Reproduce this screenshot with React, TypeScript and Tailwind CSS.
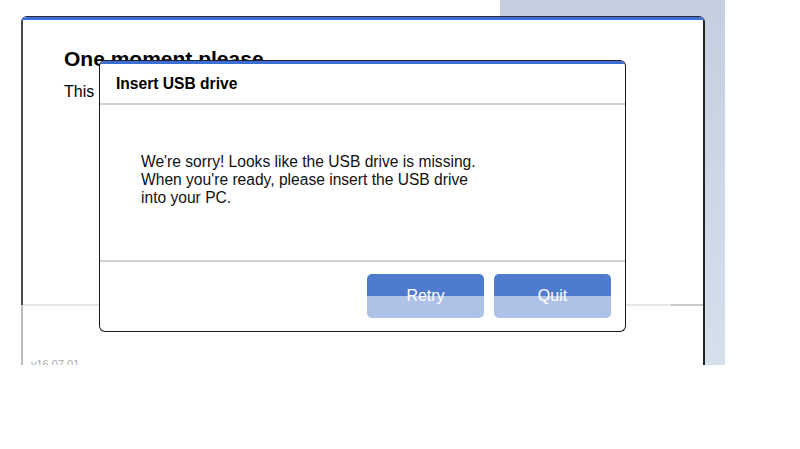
import React from "react";

export default function App() {
  return (
    <div className="w-[800px] h-[449px] bg-white" style={{ fontFamily: '"Liberation Sans", Arial, sans-serif' }}>
      <div className="relative w-[725px] h-[365px] overflow-hidden flex">
        <div className="w-[500px] h-full bg-white" />
        <div className="w-[225px] h-full bg-gradient-to-b from-[#c5cfdf] to-[#d6dfec]" />

        {/* Outer window */}
        <div className="absolute left-[21px] top-[16px] w-[684px] h-[400px] flex flex-col bg-white rounded-t-[6px] border-t border-[#2a2a40] overflow-hidden">
          <div className="h-[3px] bg-[#3b6fd1]" />
          <div className="flex-1 flex flex-col border-x-2 border-x-[#4a4a4a] border-r-[#222]">
            <div className="h-[284px] pl-[41px] pt-[25px] flex flex-col">
              <div className="text-[21px] leading-[28px] font-bold text-black">One moment please</div>
              <div className="mt-[7px] text-[16px] leading-[24px] text-black">This computer is being prepared.</div>
            </div>
            <div className="h-[2px] bg-[#e6e6e6] flex">
              <div className="flex-1" />
              <div className="w-[32px] bg-[#c9c9c9]" />
            </div>
            <div className="flex-1 pl-[8px] pt-[50px] text-[11px] text-[#aaa]">v16.07.01</div>
          </div>
        </div>
        <div className="absolute left-[21px] top-[305px] w-[2px] h-[60px] bg-[#bdbdbd]" />

        {/* Dialog */}
        <div className="absolute left-[99px] top-[60px] w-[527px] h-[272px] bg-white rounded-[6px] border border-[#1a1a1a] border-t-[#223] overflow-hidden flex flex-col">
          <div className="h-[3px] bg-[#3b6fd1]" />
          <div className="h-[39px] flex items-center pl-[16px] text-[15.6px] leading-[20px] font-bold text-black">Insert USB drive</div>
          <div className="h-[2px] bg-[#cfcfd6]" />
          <div className="h-[155px] pl-[41px] pt-[48px] text-[15.6px] leading-[18px] text-[#111]">
            We're sorry! Looks like the USB drive is missing.
            <br />
            When you're ready, please insert the USB drive
            <br />
            into your PC.
          </div>
          <div className="h-[2px] bg-[#cfd2d8]" />
          <div className="flex-1 flex justify-end items-start gap-[10px] pr-[14px] pt-[12px]">
            <Btn label="Retry" />
            <Btn label="Quit" />
          </div>
        </div>
      </div>
    </div>
  );
}

function Btn({ label }: { label: string }) {
  return (
    <div className="relative w-[117px] h-[44px] rounded-[5px] overflow-hidden flex flex-col">
      <div className="h-[22px] bg-[#4f7bcf]" />
      <div className="flex-1 bg-[#aec2e7]" />
      <div className="absolute inset-0 flex items-center justify-center text-white text-[16px] leading-none">{label}</div>
    </div>
  );
}
